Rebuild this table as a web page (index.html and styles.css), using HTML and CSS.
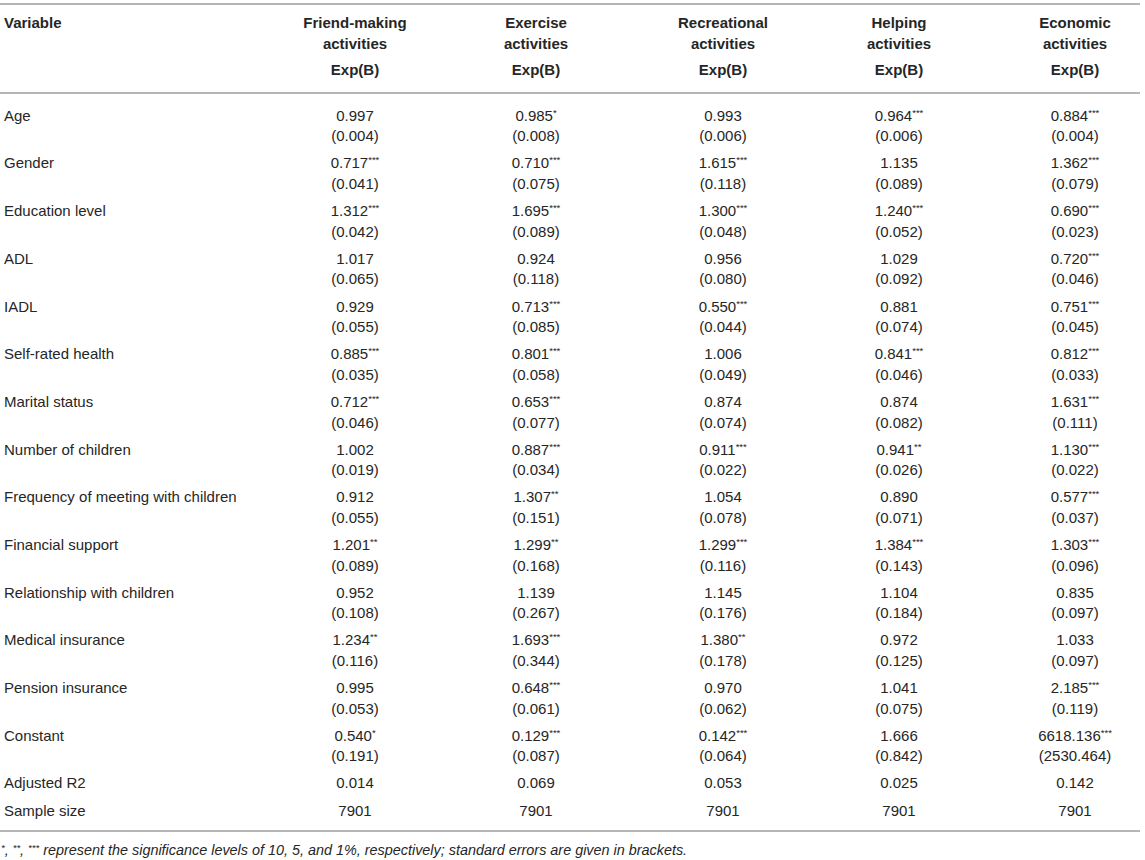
FILE: index.html
```html
<!DOCTYPE html>
<html lang="en">
<head>
<meta charset="utf-8">
<title>Table</title>
<link rel="stylesheet" href="styles.css">
</head>
<body>
<div class="page">
<table class="data">
<colgroup>
<col class="c-var">
<col class="c-1">
<col class="c-2">
<col class="c-3">
<col class="c-4">
<col class="c-5">
</colgroup>
<thead>
<tr class="names">
<th class="var" rowspan="2">Variable</th>
<th>Friend-making<br>activities</th>
<th>Exercise<br>activities</th>
<th>Recreational<br>activities</th>
<th>Helping<br>activities</th>
<th>Economic<br>activities</th>
</tr>
<tr class="stat">
<th>Exp(B)</th>
<th>Exp(B)</th>
<th>Exp(B)</th>
<th>Exp(B)</th>
<th>Exp(B)</th>
</tr>
</thead>
<tbody>
<tr><td class="var">Age</td><td>0.997<br>(0.004)</td><td>0.985<sup>*</sup><br>(0.008)</td><td>0.993<br>(0.006)</td><td>0.964<sup>***</sup><br>(0.006)</td><td>0.884<sup>***</sup><br>(0.004)</td></tr>
<tr><td class="var">Gender</td><td>0.717<sup>***</sup><br>(0.041)</td><td>0.710<sup>***</sup><br>(0.075)</td><td>1.615<sup>***</sup><br>(0.118)</td><td>1.135<br>(0.089)</td><td>1.362<sup>***</sup><br>(0.079)</td></tr>
<tr><td class="var">Education level</td><td>1.312<sup>***</sup><br>(0.042)</td><td>1.695<sup>***</sup><br>(0.089)</td><td>1.300<sup>***</sup><br>(0.048)</td><td>1.240<sup>***</sup><br>(0.052)</td><td>0.690<sup>***</sup><br>(0.023)</td></tr>
<tr><td class="var">ADL</td><td>1.017<br>(0.065)</td><td>0.924<br>(0.118)</td><td>0.956<br>(0.080)</td><td>1.029<br>(0.092)</td><td>0.720<sup>***</sup><br>(0.046)</td></tr>
<tr><td class="var">IADL</td><td>0.929<br>(0.055)</td><td>0.713<sup>***</sup><br>(0.085)</td><td>0.550<sup>***</sup><br>(0.044)</td><td>0.881<br>(0.074)</td><td>0.751<sup>***</sup><br>(0.045)</td></tr>
<tr><td class="var">Self-rated health</td><td>0.885<sup>***</sup><br>(0.035)</td><td>0.801<sup>***</sup><br>(0.058)</td><td>1.006<br>(0.049)</td><td>0.841<sup>***</sup><br>(0.046)</td><td>0.812<sup>***</sup><br>(0.033)</td></tr>
<tr><td class="var">Marital status</td><td>0.712<sup>***</sup><br>(0.046)</td><td>0.653<sup>***</sup><br>(0.077)</td><td>0.874<br>(0.074)</td><td>0.874<br>(0.082)</td><td>1.631<sup>***</sup><br>(0.111)</td></tr>
<tr><td class="var">Number of children</td><td>1.002<br>(0.019)</td><td>0.887<sup>***</sup><br>(0.034)</td><td>0.911<sup>***</sup><br>(0.022)</td><td>0.941<sup>**</sup><br>(0.026)</td><td>1.130<sup>***</sup><br>(0.022)</td></tr>
<tr><td class="var">Frequency of meeting with children</td><td>0.912<br>(0.055)</td><td>1.307<sup>**</sup><br>(0.151)</td><td>1.054<br>(0.078)</td><td>0.890<br>(0.071)</td><td>0.577<sup>***</sup><br>(0.037)</td></tr>
<tr><td class="var">Financial support</td><td>1.201<sup>**</sup><br>(0.089)</td><td>1.299<sup>**</sup><br>(0.168)</td><td>1.299<sup>***</sup><br>(0.116)</td><td>1.384<sup>***</sup><br>(0.143)</td><td>1.303<sup>***</sup><br>(0.096)</td></tr>
<tr><td class="var">Relationship with children</td><td>0.952<br>(0.108)</td><td>1.139<br>(0.267)</td><td>1.145<br>(0.176)</td><td>1.104<br>(0.184)</td><td>0.835<br>(0.097)</td></tr>
<tr><td class="var">Medical insurance</td><td>1.234<sup>**</sup><br>(0.116)</td><td>1.693<sup>***</sup><br>(0.344)</td><td>1.380<sup>**</sup><br>(0.178)</td><td>0.972<br>(0.125)</td><td>1.033<br>(0.097)</td></tr>
<tr><td class="var">Pension insurance</td><td>0.995<br>(0.053)</td><td>0.648<sup>***</sup><br>(0.061)</td><td>0.970<br>(0.062)</td><td>1.041<br>(0.075)</td><td>2.185<sup>***</sup><br>(0.119)</td></tr>
<tr><td class="var">Constant</td><td>0.540<sup>*</sup><br>(0.191)</td><td>0.129<sup>***</sup><br>(0.087)</td><td>0.142<sup>***</sup><br>(0.064)</td><td>1.666<br>(0.842)</td><td>6618.136<sup>***</sup><br>(2530.464)</td></tr>
<tr><td class="var">Adjusted R2</td><td>0.014</td><td>0.069</td><td>0.053</td><td>0.025</td><td>0.142</td></tr>
<tr><td class="var">Sample size</td><td>7901</td><td>7901</td><td>7901</td><td>7901</td><td>7901</td></tr>
</tbody>
</table>
<p class="note"><sup>*</sup>, <sup>**</sup>, <sup>***</sup> represent the significance levels of 10, 5, and 1%, respectively; standard errors are given in brackets.</p>
</div>
</body>
</html>
```
FILE: styles.css
```css
html, body {
  margin: 0;
  padding: 0;
  background: #fff;
}

body {
  font-family: "Liberation Sans", Arial, Helvetica, sans-serif;
  color: #262626;
}

.page {
  padding-top: 3px;
  width: 1140px;
}

.data {
  width: 1140px;
  border-collapse: collapse;
  table-layout: fixed;
  font-size: 15px;
  line-height: 20.6px;
}

.c-var { width: 296px; }
.c-1 { width: 118px; }
.c-2 { width: 244px; }
.c-3 { width: 130px; }
.c-4 { width: 222px; }
.c-5 { width: 130px; }

.data th {
  font-weight: bold;
  text-align: center;
  vertical-align: top;
}

.data th.var {
  text-align: left;
  border-top: 2px solid #b5b5b5;
  border-bottom: 2px solid #b5b5b5;
  padding: 8px 4px 0;
}

.names th {
  border-top: 2px solid #b5b5b5;
  padding: 8px 4px 1px;
}

.stat th {
  padding: 4.5px 4px 12px;
  border-bottom: 2px solid #b5b5b5;
}

.data td {
  padding: 3.25px 4px;
  text-align: center;
  vertical-align: top;
}

.data td.var {
  text-align: left;
}

.data tbody tr:first-child td {
  padding-top: 11.5px;
}

.data tbody tr:last-child td {
  padding-bottom: 8.5px;
  border-bottom: 2px solid #b5b5b5;
}

.data sup {
  font-size: 9.5px;
  line-height: 0;
  vertical-align: 5px;
}

.note {
  margin: 10px 0 0;
  padding-left: 1px;
  font-size: 14.4px;
  line-height: 16px;
  font-style: italic;
}

.note sup {
  font-size: 9.5px;
  line-height: 0;
  vertical-align: 4px;
}
```
